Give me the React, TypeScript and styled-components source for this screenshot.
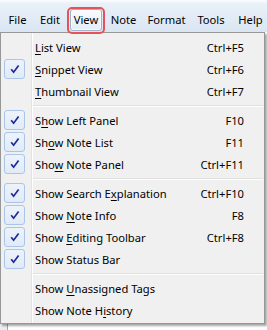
import React from "react";
import styled, { createGlobalStyle } from "styled-components";

const GlobalStyle = createGlobalStyle`
  html, body { margin: 0; padding: 0; background: #ffffff; }
  body { font-family: "Segoe UI", "Noto Sans", "Liberation Sans", sans-serif; font-size: 11.2px; color: #000; }
`;

const Frame = styled.div`
  position: relative;
  width: 267px;
  height: 330px;
  overflow: hidden;
  background: #ffffff;
`;

const MenuBar = styled.div`
  position: relative;
  z-index: 2;
  height: 32px;
  display: flex;
  align-items: flex-end;
  padding-left: 2px;
  box-sizing: border-box;
  background: linear-gradient(#fbfcfe 0px, #e9f0f8 4px, #dbe6f3 100%);
`;

const MenuItem = styled.div<{ $active?: boolean; $w: number }>`
  position: relative;
  flex: 0 0 ${(p) => p.$w}px;
  height: 22px;
  margin-bottom: 1px;
  display: flex;
  justify-content: center;
  line-height: 22px;
  white-space: nowrap;
  color: #000;
  &::before {
    content: "";
    display: ${(p) => (p.$active ? "block" : "none")};
    position: absolute;
    inset: 0 3px 0 3px;
    border: 1px solid #9fb2c8;
    border-radius: 3px;
    background: linear-gradient(#f9fbfd, #e4ecf5);
    box-shadow: inset 0 0 0 1px rgba(255, 255, 255, 0.7);
  }
  &::after {
    content: "";
    display: ${(p) => (p.$active ? "block" : "none")};
    position: absolute;
    inset: -2px 0 -3px 0;
    border: 2px solid #e4525a;
    border-radius: 5px;
  }
`;

const MenuLabel = styled.span`
  position: relative;
  z-index: 1;
`;

const Content = styled.div`
  height: 298px;
  display: flex;
  background: #ffffff;
`;

const SidePane = styled.div`
  width: 9px;
  background: #e9edf2;
  border-right: 1px solid #9aa6b4;
`;

const NoteList = styled.div`
  flex: 1;
  display: flex;
  flex-direction: column;
  justify-content: flex-end;
`;

const NoteRow = styled.div`
  height: 16px;
  margin-bottom: -12px;
  padding-left: 90px;
  white-space: nowrap;
  line-height: 16px;
  color: #1b3c9c;
`;

const NoteTitle = styled.span`
  margin-left: 8px;
  color: #333;
`;

const Dropdown = styled.div`
  position: absolute;
  z-index: 1;
  top: 32px;
  left: 0;
  width: 265px;
  box-sizing: border-box;
  border: 1px solid #979797;
  padding: 3px 0 2px 0;
  background: linear-gradient(
      to right,
      transparent 30px,
      #e2e3e3 30px,
      #e2e3e3 31px,
      #ffffff 31px,
      #ffffff 32px,
      transparent 32px
    ),
    #f0f0f0;
  box-shadow: 2px 2px 2px rgba(0, 0, 0, 0.35);
`;

const Row = styled.div`
  display: grid;
  grid-template-columns: 34px 1fr auto;
  align-items: center;
  height: 22px;
  padding-right: 20px;
  white-space: nowrap;
`;

const CheckCell = styled.div`
  display: flex;
  align-items: center;
  padding-left: 3px;
  height: 22px;
`;

const CheckBox = styled.div`
  width: 21px;
  height: 20px;
  box-sizing: border-box;
  border: 1px solid #a9c5e8;
  border-radius: 3px;
  background: linear-gradient(#edf3fb, #e1eaf7);
  display: flex;
  align-items: center;
  justify-content: center;
`;

const Label = styled.span`
  color: #000;
`;

const Key = styled.span`
  text-decoration: underline;
  text-underline-offset: 2px;
`;

const Shortcut = styled.span`
  color: #000;
  text-align: right;
`;

const Separator = styled.div`
  height: 7px;
  margin-left: 32px;
  margin-right: 1px;
  display: flex;
  flex-direction: column;
  justify-content: center;
  &::before {
    content: "";
    display: block;
    height: 1px;
    background: #e0e0e0;
  }
  &::after {
    content: "";
    display: block;
    height: 1px;
    background: #ffffff;
  }
`;

type Item =
  | { sep: true }
  | { sep?: false; pre: string; key: string; post: string; checked?: boolean; shortcut?: string };

const items: Item[] = [
  { pre: "", key: "L", post: "ist View", shortcut: "Ctrl+F5" },
  { pre: "", key: "S", post: "nippet View", checked: true, shortcut: "Ctrl+F6" },
  { pre: "", key: "T", post: "humbnail View", shortcut: "Ctrl+F7" },
  { sep: true },
  { pre: "S", key: "h", post: "ow Left Panel", checked: true, shortcut: "F10" },
  { pre: "Sh", key: "o", post: "w Note List", checked: true, shortcut: "F11" },
  { pre: "Sho", key: "w", post: " Note Panel", checked: true, shortcut: "Ctrl+F11" },
  { sep: true },
  { pre: "Show Search E", key: "x", post: "planation", checked: true, shortcut: "Ctrl+F10" },
  { pre: "Show ", key: "N", post: "ote Info", checked: true, shortcut: "F8" },
  { pre: "Show ", key: "E", post: "diting Toolbar", checked: true, shortcut: "Ctrl+F8" },
  { pre: "Show Status Bar", key: "", post: "", checked: true },
  { sep: true },
  { pre: "Show ", key: "U", post: "nassigned Tags" },
  { pre: "Show Note H", key: "i", post: "story" },
];

const CheckMark = () => (
  <svg width="12" height="12" viewBox="0 0 12 12">
    <path d="M2.2 6.2 L4.6 9.2 L9.6 2.4" fill="none" stroke="#1b2a98" strokeWidth="1.7" strokeLinejoin="miter" strokeLinecap="butt" />
  </svg>
);

const menus: { name: string; w: number }[] = [
  { name: "File", w: 31 },
  { name: "Edit", w: 34 },
  { name: "View", w: 38 },
  { name: "Note", w: 37 },
  { name: "Format", w: 49 },
  { name: "Tools", w: 40 },
  { name: "Help", w: 39 },
];

export default function App() {
  return (
    <>
      <GlobalStyle />
      <Frame>
        <MenuBar>
          {menus.map((m) => (
            <MenuItem key={m.name} $w={m.w} $active={m.name === "View"}>
              <MenuLabel>{m.name}</MenuLabel>
            </MenuItem>
          ))}
        </MenuBar>
        <Content>
          <SidePane />
          <NoteList>
            <NoteRow>
              2012-12-18<NoteTitle>Newburyport notes</NoteTitle>
            </NoteRow>
          </NoteList>
        </Content>
        <Dropdown>
          {items.map((it, i) =>
            it.sep ? (
              <Separator key={i} />
            ) : (
              <Row key={i}>
                <CheckCell>
                  {it.checked ? (
                    <CheckBox>
                      <CheckMark />
                    </CheckBox>
                  ) : null}
                </CheckCell>
                <Label>
                  {it.pre}
                  {it.key ? <Key>{it.key}</Key> : null}
                  {it.post}
                </Label>
                <Shortcut>{it.shortcut ?? ""}</Shortcut>
              </Row>
            )
          )}
        </Dropdown>
      </Frame>
    </>
  );
}
